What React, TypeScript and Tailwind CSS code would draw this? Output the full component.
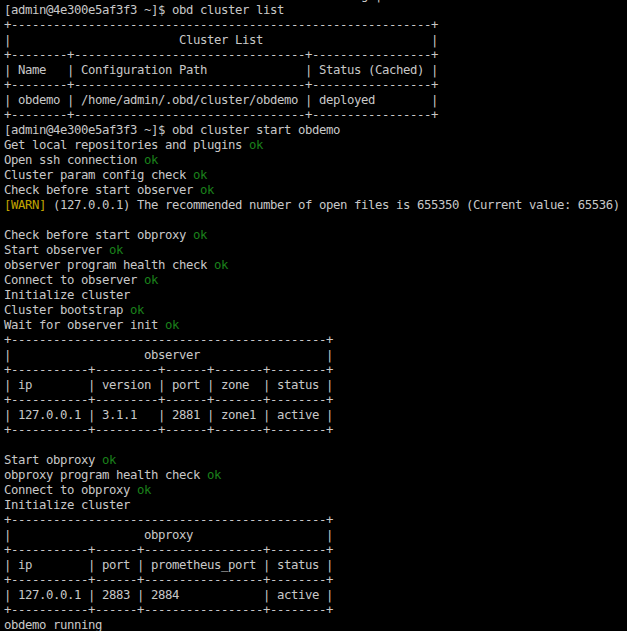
const OK = "ok";

type Line = { text: string; ok?: boolean; warn?: boolean };

const lines: Line[] = [
  { text: "                                                   g |" },
  { text: "[admin@4e300e5af3f3 ~]$ obd cluster list" },
  { text: "+------------------------------------------------------------+" },
  { text: "|                        Cluster List                        |" },
  { text: "+--------+---------------------------------+-----------------+" },
  { text: "| Name   | Configuration Path              | Status (Cached) |" },
  { text: "+--------+---------------------------------+-----------------+" },
  { text: "| obdemo | /home/admin/.obd/cluster/obdemo | deployed        |" },
  { text: "+--------+---------------------------------+-----------------+" },
  { text: "[admin@4e300e5af3f3 ~]$ obd cluster start obdemo" },
  { text: "Get local repositories and plugins", ok: true },
  { text: "Open ssh connection", ok: true },
  { text: "Cluster param config check", ok: true },
  { text: "Check before start observer", ok: true },
  { text: " (127.0.0.1) The recommended number of open files is 655350 (Current value: 65536)", warn: true },
  { text: "" },
  { text: "Check before start obproxy", ok: true },
  { text: "Start observer", ok: true },
  { text: "observer program health check", ok: true },
  { text: "Connect to observer", ok: true },
  { text: "Initialize cluster" },
  { text: "Cluster bootstrap", ok: true },
  { text: "Wait for observer init", ok: true },
  { text: "+---------------------------------------------+" },
  { text: "|                   observer                  |" },
  { text: "+-----------+---------+------+-------+--------+" },
  { text: "| ip        | version | port | zone  | status |" },
  { text: "+-----------+---------+------+-------+--------+" },
  { text: "| 127.0.0.1 | 3.1.1   | 2881 | zone1 | active |" },
  { text: "+-----------+---------+------+-------+--------+" },
  { text: "" },
  { text: "Start obproxy", ok: true },
  { text: "obproxy program health check", ok: true },
  { text: "Connect to obproxy", ok: true },
  { text: "Initialize cluster" },
  { text: "+---------------------------------------------+" },
  { text: "|                   obproxy                   |" },
  { text: "+-----------+------+-----------------+--------+" },
  { text: "| ip        | port | prometheus_port | status |" },
  { text: "+-----------+------+-----------------+--------+" },
  { text: "| 127.0.0.1 | 2883 | 2884            | active |" },
  { text: "+-----------+------+-----------------+--------+" },
  { text: "obdemo running" },
];

export default function App() {
  return (
    <div className="w-[627px] h-[631px] bg-black overflow-hidden">
      <div
        className="mt-[-12px] pl-[4px] text-[#c8c8c8] text-[12.3px] tracking-[-0.405px] leading-[15px]"
        style={{ fontFamily: '"DejaVu Sans Mono", "Liberation Mono", monospace' }}
      >
        {lines.map((line, i) => (
          <div key={i} className="h-[15px] whitespace-pre">
            {line.warn && <span className="text-[#c0a400]">[WARN]</span>}
            {line.text}
            {line.ok && (
              <>
                {" "}
                <span className="text-[#1b801b]">{OK}</span>
              </>
            )}
          </div>
        ))}
      </div>
    </div>
  );
}
